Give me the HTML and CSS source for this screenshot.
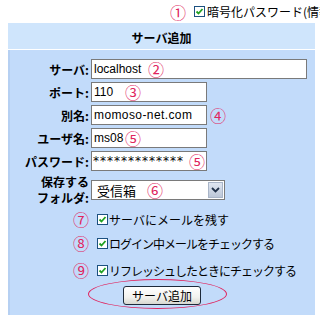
FILE: index.html
```html
<!DOCTYPE html>
<html lang="ja">
<head>
    <meta charset="UTF-8">
    <meta name="viewport" content="width=device-width, initial-scale=1.0">
    <title>サーバ追加</title>
    <link rel="stylesheet" href="styles.css">
</head>
<body>
    <div class="top-line">
        <span class="num">①</span>
        <span class="check"><svg viewBox="0 0 11 11"><rect x="0.5" y="0.5" width="10" height="10" fill="#fff" stroke="#1c5180"/><polyline points="2.5,5.5 4.5,7.5 8.5,3" fill="none" stroke="#21a121" stroke-width="1.8"/></svg></span>
        <span class="top-text">暗号化パスワード(情報を保存する)</span>
    </div>

    <div class="panel">
        <div class="panel-head">サーバ追加</div>
        <div class="panel-body">
            <div class="form">
                <label class="label">サーバ:</label>
                <div class="field">
                    <input class="input wide" type="text" value="localhost">
                    <span class="num over" style="left:57px">②</span>
                </div>

                <label class="label">ポート:</label>
                <div class="field">
                    <input class="input" type="text" value="110">
                    <span class="num over" style="left:34px">③</span>
                </div>

                <label class="label">別名:</label>
                <div class="field">
                    <input class="input spaced" type="text" value="momoso-net.com">
                    <span class="num side">④</span>
                </div>

                <label class="label">ユーザ名:</label>
                <div class="field">
                    <input class="input" type="text" value="ms08">
                    <span class="num over" style="left:34px">⑤</span>
                </div>

                <label class="label">パスワード:</label>
                <div class="field">
                    <input class="input stars" type="text" value="*************">
                    <span class="num over" style="left:98px">⑤</span>
                </div>

                <label class="label two-line">保存する<br>フォルダ:</label>
                <div class="field">
                    <div class="select">
                        <span class="select-text">受信箱</span>
                        <span class="select-btn"><svg viewBox="0 0 9 6"><polyline points="1,1 4.5,4.5 8,1" fill="none" stroke="#22324a" stroke-width="1.8"/></svg></span>
                    </div>
                    <span class="num over" style="left:56px">⑥</span>
                </div>
            </div>

            <div class="options">
                <div class="option">
                    <span class="num">⑦</span>
                    <span class="check"><svg viewBox="0 0 11 11"><rect x="0.5" y="0.5" width="10" height="10" fill="#fff" stroke="#1c5180"/><polyline points="2.5,5.5 4.5,7.5 8.5,3" fill="none" stroke="#21a121" stroke-width="1.8"/></svg></span>
                    <span>サーバにメールを残す</span>
                </div>
                <div class="option">
                    <span class="num">⑧</span>
                    <span class="check"><svg viewBox="0 0 11 11"><rect x="0.5" y="0.5" width="10" height="10" fill="#fff" stroke="#1c5180"/><polyline points="2.5,5.5 4.5,7.5 8.5,3" fill="none" stroke="#21a121" stroke-width="1.8"/></svg></span>
                    <span class="tight">ログイン中メールをチェックする</span>
                </div>
                <div class="option last">
                    <span class="num">⑨</span>
                    <span class="check"><svg viewBox="0 0 11 11"><rect x="0.5" y="0.5" width="10" height="10" fill="#fff" stroke="#1c5180"/><polyline points="2.5,5.5 4.5,7.5 8.5,3" fill="none" stroke="#21a121" stroke-width="1.8"/></svg></span>
                    <span class="tight">リフレッシュしたときにチェックする</span>
                </div>
            </div>

            <div class="actions">
                <button class="btn">サーバ追加</button>
                <span class="ring"></span>
            </div>
        </div>
    </div>
</body>
</html>
```

FILE: styles.css
```css
* {
    margin: 0;
    padding: 0;
    box-sizing: border-box;
}
body {
    font-family: "Noto Sans CJK JP", sans-serif;
    font-size: 12px;
    color: #000;
    background: #fff;
    width: 320px;
    height: 320px;
    overflow: hidden;
}
.num {
    color: #e0245e;
    font-size: 16px;
    line-height: 16px;
    font-weight: normal;
}
.check {
    display: inline-block;
    width: 11px;
    height: 11px;
}
.check svg {
    display: block;
    width: 11px;
    height: 11px;
}
.top-line {
    display: flex;
    align-items: center;
    height: 23px;
    padding-left: 170px;
    white-space: nowrap;
    overflow: hidden;
}
.top-line .check {
    margin-left: 8px;
    margin-right: 2px;
}
.panel {
    margin-left: 8px;
    width: 307px;
}
.panel-head {
    background: #cfe5fc;
    height: 27px;
    border-bottom: 1px solid #fff;
    text-align: center;
    font-weight: bold;
    line-height: 30px;
    font-size: 12px;
}
.panel-body {
    background: #c2dbfa;
    border-left: 2px solid #b6d0f2;
    padding: 9px 0 9px 0;
    height: 265px;
}
.form {
    display: grid;
    grid-template-columns: 79px 1fr;
    column-gap: 2px;
    row-gap: 3px;
    align-items: center;
}
.label {
    text-align: right;
    font-weight: bold;
    white-space: nowrap;
}
.two-line {
    line-height: 16px;
}
.field {
    position: relative;
    display: flex;
    align-items: center;
}
.input {
    width: 116px;
    height: 20px;
    border: 1px solid #7a7a7a;
    background: #fff;
    font-family: "Liberation Sans", sans-serif;
    font-size: 12px;
    padding: 0 2px;
    color: #000;
}
.wide {
    width: 216px;
}
.spaced {
    letter-spacing: 0.4px;
}
.stars {
    font-family: "DejaVu Sans", sans-serif;
    letter-spacing: 1px;
    padding-left: 1px;
}
.over {
    position: absolute;
    top: 2px;
}
.side {
    margin-left: 3px;
}
.select {
    display: flex;
    align-items: center;
    justify-content: space-between;
    width: 134px;
    height: 20px;
    border: 1px solid #7a7a7a;
    background: #fff;
    padding: 0 1px 0 5px;
}
.select-text {
    font-size: 13px;
}
.select-btn {
    display: flex;
    align-items: center;
    justify-content: center;
    width: 15px;
    height: 16px;
    background: linear-gradient(#dfe6f1, #bcc7d8);
    border: 1px solid #a9b5c8;
}
.select-btn svg {
    width: 9px;
    height: 6px;
}
.options {
    margin-top: 1px;
    padding-left: 63px;
}
.option {
    display: flex;
    align-items: center;
    height: 24px;
}
.option .check {
    margin-left: 8px;
    margin-right: 1px;
}
.option.last {
    margin-top: 3px;
}
.tight {
    letter-spacing: -1px;
}
.actions {
    position: relative;
    margin-top: 4px;
    margin-left: 113px;
    width: 80px;
}
.btn {
    display: block;
    width: 78px;
    height: 19px;
    font-family: "Noto Sans CJK JP", sans-serif;
    font-size: 12px;
    line-height: 15px;
    color: #000;
    background: linear-gradient(#ffffff, #f2f2ee 60%, #d8d8d0);
    border: 1px solid #1e2a3a;
    border-radius: 3px;
}
.ring {
    position: absolute;
    left: -35px;
    top: -7px;
    width: 139px;
    height: 30px;
    border: 1.5px solid #e0245e;
    border-radius: 50%;
}
```
